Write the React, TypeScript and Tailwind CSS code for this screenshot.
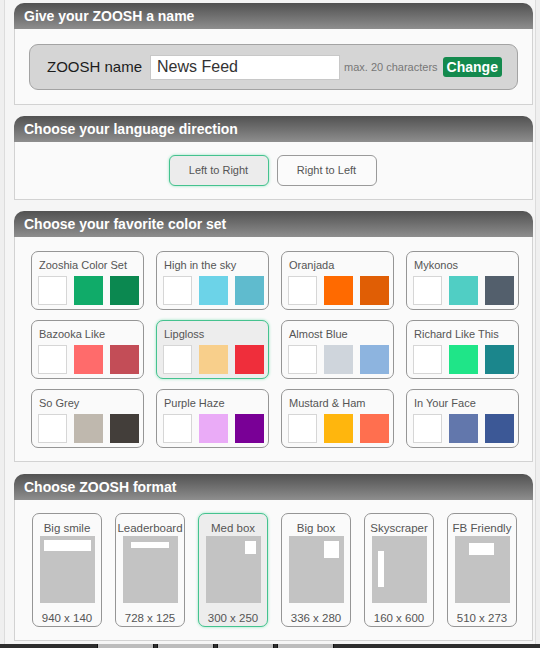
import React from "react";

const colorSets = [
  { name: "Zooshia Color Set", a: "#10ab69", b: "#0b8850" },
  { name: "High in the sky", a: "#6cd3e8", b: "#5fbbce" },
  { name: "Oranjada", a: "#ff6a00", b: "#e05e05" },
  { name: "Mykonos", a: "#50cec4", b: "#535f6c" },
  { name: "Bazooka Like", a: "#ff6b6b", b: "#c34d57" },
  { name: "Lipgloss", a: "#f8cf8b", b: "#ef2e3b", selected: true },
  { name: "Almost Blue", a: "#cfd5dc", b: "#8db4df" },
  { name: "Richard Like This", a: "#1fe588", b: "#1b868c" },
  { name: "So Grey", a: "#bfb8ae", b: "#433e3a" },
  { name: "Purple Haze", a: "#eaabf7", b: "#790096" },
  { name: "Mustard & Ham", a: "#ffb60d", b: "#ff6f4f" },
  { name: "In Your Face", a: "#6277ac", b: "#3c5896" },
];

function SectionHeader({ title }: { title: string }) {
  return (
    <div className="h-[26px] rounded-t-[10px] bg-gradient-to-b from-[#525252] to-[#8e8e8e] pl-[10px] text-[14px] font-bold leading-[27px] text-white">
      {title}
    </div>
  );
}

function Section({
  title,
  className,
  children,
}: {
  title: string;
  className?: string;
  children: React.ReactNode;
}) {
  return (
    <div className={className}>
      <SectionHeader title={title} />
      <div className="border border-t-0 border-[#d2d2d2] bg-[#fafafa]">
        {children}
      </div>
    </div>
  );
}

// little white rectangle showing where the ad sits on the page
function FormatPreview({ kind }: { kind: string }) {
  return (
    <div className="relative mx-auto h-[67px] w-[55px] bg-[#c3c3c3]">
      {kind === "big" && (
        <div className="absolute left-[4px] top-[4px] h-[11px] w-[47px] bg-white" />
      )}
      {kind === "leader" && (
        <div className="absolute left-[8px] top-[6px] h-[6px] w-[38px] bg-white" />
      )}
      {kind === "med" && (
        <div className="absolute right-[5px] top-[5px] h-[13px] w-[11px] bg-white" />
      )}
      {kind === "bigbox" && (
        <div className="absolute right-[5px] top-[5px] h-[17px] w-[15px] bg-white" />
      )}
      {kind === "sky" && (
        <div className="absolute left-[6px] top-[15px] h-[36px] w-[6px] bg-white" />
      )}
      {kind === "fb" && (
        <div className="absolute left-[14px] top-[7px] h-[12px] w-[25px] bg-white" />
      )}
    </div>
  );
}

const formats = [
  { name: "Big smile", size: "940 x 140", kind: "big" },
  { name: "Leaderboard", size: "728 x 125", kind: "leader" },
  { name: "Med box", size: "300 x 250", kind: "med", selected: true },
  { name: "Big box", size: "336 x 280", kind: "bigbox" },
  { name: "Skyscraper", size: "160 x 600", kind: "sky" },
  { name: "FB Friendly", size: "510 x 273", kind: "fb" },
];

export default function App() {
  return (
    <div
      className="h-[648px] w-[540px] overflow-hidden bg-[#efefef]"
      style={{ fontFamily: '"Liberation Sans", Arial, sans-serif' }}
    >
      <div className="ml-[4px] w-[532px] border-x border-[#dcdcdc] bg-[#f5f5f5] pb-[3px] pt-[3px]">
        {/* Name */}
        <Section title="Give your ZOOSH a name" className="ml-[9px] w-[519px]">
          <div className="px-[14px] pb-[14px] pt-[15px]">
            <div className="flex h-[46px] items-center rounded-[9px] border border-[#a3a3a3] bg-[#d5d5d5] pl-[17px]">
              <span className="text-[15px] text-[#1c1c1c]">ZOOSH name</span>
              <input
                defaultValue="News Feed"
                className="ml-[8px] h-[25px] w-[190px] border border-[#c8c8c8] bg-white px-[6px] text-[16px] text-[#333] outline-none"
              />
              <span className="ml-[4px] text-[11px] text-[#777]">
                max. 20 characters
              </span>
              <button className="ml-[5px] h-[20px] rounded-[3px] bg-[#148a4e] px-[4px] text-[14px] font-bold leading-[20px] text-white">
                Change
              </button>
            </div>
          </div>
        </Section>

        {/* Direction */}
        <Section
          title="Choose your language direction"
          className="ml-[9px] mt-[11px] w-[519px]"
        >
          <div className="flex h-[57px] items-center justify-center gap-[8px] pr-[2px]">
            <button className="h-[31px] w-[100px] rounded-[6px] border border-[#45c28f] bg-[#ececec] text-[11px] text-[#555] shadow-[0_0_3px_#8fe3bd]">
              Left to Right
            </button>
            <button className="h-[31px] w-[100px] rounded-[6px] border border-[#9a9a9a] bg-[#fbfbfb] text-[11px] text-[#555]">
              Right to Left
            </button>
          </div>
        </Section>

        {/* Colors */}
        <Section
          title="Choose your favorite color set"
          className="ml-[9px] mt-[11px] w-[519px]"
        >
          <div className="grid grid-cols-4 gap-x-[12px] gap-y-[10px] pb-[13px] pl-[16px] pr-[13px] pt-[14px]">
            {colorSets.map((set) => (
              <div
                key={set.name}
                className={
                  set.selected
                    ? "h-[59px] rounded-[7px] border border-[#45c28f] bg-[#ededed] pl-[6px] pt-[6px] shadow-[0_0_3px_#8fe3bd]"
                    : "h-[59px] rounded-[7px] border border-[#959595] bg-[#fafafa] pl-[6px] pt-[6px]"
                }
              >
                <div className="pl-[1px] text-[11px] leading-[14px] text-[#555]">
                  {set.name}
                </div>
                <div className="mt-[4px] flex gap-[7px]">
                  <div className="h-[29px] w-[29px] border border-[#d6d6d6] bg-white" />
                  <div
                    className="h-[29px] w-[29px]"
                    style={{ backgroundColor: set.a }}
                  />
                  <div
                    className="h-[29px] w-[29px]"
                    style={{ backgroundColor: set.b }}
                  />
                </div>
              </div>
            ))}
          </div>
        </Section>

        {/* Format */}
        <Section
          title="Choose ZOOSH format"
          className="ml-[9px] mt-[12px] w-[519px]"
        >
          <div className="flex gap-[13px] pb-[13px] pl-[17px] pt-[13px]">
            {formats.map((f) => (
              <div
                key={f.name}
                className={
                  f.selected
                    ? "h-[114px] w-[70px] rounded-[7px] border border-[#45c28f] bg-[#ededed] pt-[6px] shadow-[0_0_3px_#8fe3bd]"
                    : "h-[114px] w-[70px] rounded-[7px] border border-[#959595] bg-[#fafafa] pt-[6px]"
                }
              >
                <div className="h-[16px] text-center text-[11.5px] leading-[16px] text-[#555]">
                  {f.name}
                </div>
                <FormatPreview kind={f.kind} />
                <div className="mt-[8px] text-center text-[11.5px] leading-[14px] text-[#555]">
                  {f.size}
                </div>
              </div>
            ))}
          </div>
        </Section>
      </div>

      {/* bottom bar */}
      <div className="flex h-[8px] bg-[#2e2e2e]">
        <div className="w-[97px]" />
        <div className="w-[57px] border-x border-[#111] bg-[#bcbcbc]" />
        <div className="ml-[3px] w-[57px] border-x border-[#111] bg-[#bcbcbc]" />
        <div className="ml-[3px] w-[57px] border-x border-[#111] bg-[#bcbcbc]" />
        <div className="ml-[3px] w-[57px] border-x border-[#111] bg-[#bcbcbc]" />
      </div>
    </div>
  );
}
